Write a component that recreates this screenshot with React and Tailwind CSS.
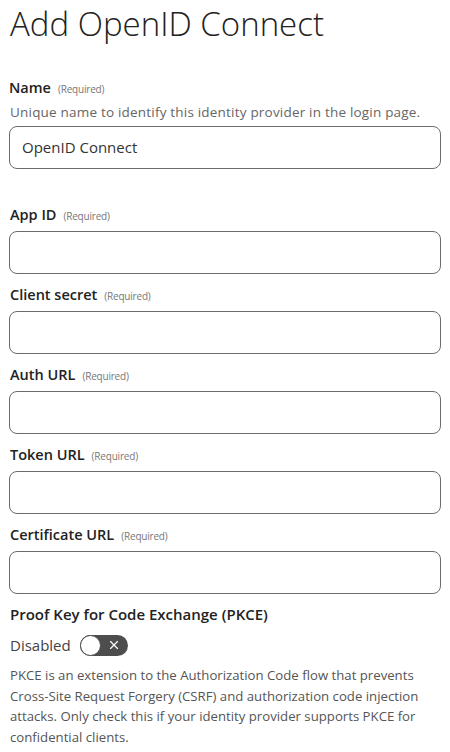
import { X } from 'lucide-react'

const font = { fontFamily: '"Open Sans", "Noto Sans", sans-serif' }

const fields = ['App ID', 'Client secret', 'Auth URL', 'Token URL', 'Certificate URL']

function Label({ children }) {
  return (
    <div className="flex items-baseline h-[20px] leading-[20px]">
      <span className="text-[14.5px] font-semibold text-[#222]">{children}</span>
      <span className="ml-[7px] text-[10px] text-[#777] tracking-[-0.2px]">(Required)</span>
    </div>
  )
}

function Input({ value = '' }) {
  return (
    <div className="h-[43px] w-full rounded-[8px] border border-[#6b6b6b] flex items-center px-[12px] text-[15px] text-[#333]">
      {value}
    </div>
  )
}

export default function App() {
  return (
    <div className="w-[450px] h-[752px] bg-white px-[9px] overflow-hidden" style={font}>
      <h1 className="pt-[2px] text-[33px] leading-[44px] font-light text-[#222] pl-[1px]">Add OpenID Connect</h1>

      {/* Name */}
      <div className="mt-[32px]">
        <Label>Name</Label>
        <p className="mt-[5px] text-[13.5px] leading-[18px] text-[#666] pl-[1px] tracking-[0.2px] whitespace-nowrap">
          Unique name to identify this identity provider in the login page.
        </p>
        <div className="mt-[5px]">
          <Input value="OpenID Connect" />
        </div>
      </div>

      <div className="mt-[36px]">
        {fields.map((f) => (
          <div key={f} className="mb-[11px]">
            <div className="pl-[1px]">
              <Label>{f}</Label>
            </div>
            <div className="mt-[6px]">
              <Input />
            </div>
          </div>
        ))}
      </div>

      {/* PKCE */}
      <div className="-mt-[2px] pl-[1px]">
        <div className="text-[15px] font-semibold leading-[22px] text-[#222]">Proof Key for Code Exchange (PKCE)</div>
        <div className="mt-[9px] flex items-center gap-[9px] h-[22px]">
          <span className="text-[15px] text-[#444]">Disabled</span>
          <div className="w-[48px] h-[21px] rounded-full bg-[#4d4d4d] flex items-center">
            <div className="w-[21px] h-[21px] rounded-full bg-white border border-[#4d4d4d]" />
            <X size={14} strokeWidth={2} className="text-white ml-[6px]" />
          </div>
        </div>
        <p className="mt-[9px] text-[13.2px] leading-[20.7px] text-[#555] whitespace-nowrap">
          PKCE is an extension to the Authorization Code flow that prevents<br />
          Cross-Site Request Forgery (CSRF) and authorization code injection<br />
          attacks. Only check this if your identity provider supports PKCE for<br />
          confidential clients.
        </p>
      </div>
    </div>
  )
}
